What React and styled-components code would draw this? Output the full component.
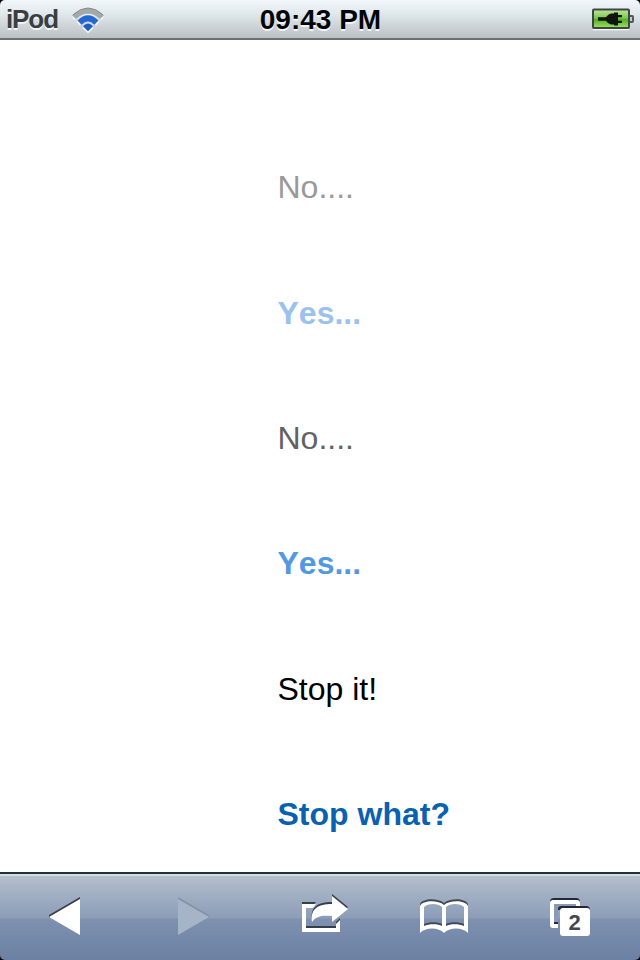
import React from "react";
import styled, { createGlobalStyle } from "styled-components";

const GlobalStyle = createGlobalStyle`
  * { box-sizing: border-box; }
  body {
    margin: 0;
    background: #fff;
    font-family: "Liberation Sans", Arial, Helvetica, sans-serif;
  }
`;

const Screen = styled.div`
  display: flex;
  flex-direction: column;
  width: 640px;
  height: 960px;
  overflow: hidden;
  background: #060a10;
`;

const StatusBar = styled.header`
  display: grid;
  grid-template-columns: 1fr auto 1fr;
  align-items: center;
  height: 40px;
  padding: 0 5px 0 6px;
  border-bottom: 2px solid #6d7072;
  border-radius: 5px 5px 0 0;
  background: linear-gradient(#f1f7fa 0, #e2e9ed 35%, #c9cfd3 75%, #bcc2c4 100%);
`;

const Carrier = styled.div`
  display: flex;
  align-items: center;
  gap: 13px;
`;

const Device = styled.span`
  color: #3a3e42;
  font-size: 26px;
  font-weight: bold;
  line-height: 38px;
  letter-spacing: -1.1px;
  text-shadow: 0 2px 0 #f0f4f6;
`;

const Clock = styled.time`
  padding-top: 2px;
  color: #050608;
  font-size: 28px;
  font-weight: bold;
  line-height: 36px;
  text-shadow: 0 2px 0 #f0f4f6;
`;

const Power = styled.div`
  display: flex;
  justify-content: flex-end;
`;

const Messages = styled.main`
  flex: 1;
  min-height: 0;
  padding: 85.3px 0 0 277.5px;
  background: #fff;
`;

const Message = styled.p`
  height: 125.4px;
  margin: 0;
  color: ${({ $color }) => $color};
  font-size: 32px;
  font-kerning: none;
  font-weight: ${({ $bold }) => ($bold ? "bold" : "normal")};
  line-height: 125.4px;
`;

const Toolbar = styled.nav`
  display: grid;
  grid-template-columns: 129px 129px 129px 117px 136px;
  height: 88px;
  border-top: 2px solid #252d37;
  border-radius: 0 0 5px 5px;
  background: linear-gradient(
    #d5dde4 0, #d5dde4 2px, #b3becd 2px, #8c9db7 44px, #7e91b0 45px, #6c80a3 100%
  );
`;

const ToolButton = styled.button`
  display: block;
  height: 86px;
  padding: 0;
  border: 0;
  background: none;
`;

const Glyph = styled.svg`
  display: block;
  width: ${({ $w }) => $w}px;
  height: ${({ $h }) => $h}px;
`;

const WifiIcon = () => (
  <Glyph $w={34} $h={28} viewBox="0 0 34 28">
    <g fill="none" stroke="#f6f9fb">
      <path d="M2 13Q17 1 32 13" strokeWidth="5" />
      <path d="M7 18.5Q17 10 27 18.5" strokeWidth="5" />
      <path d="M12 22 17 27 22 22" strokeWidth="2" />
    </g>
    <path d="M1 10.5Q17-4.5 33 10.5L29 14Q17 3.5 5 14Z" fill="#a5a8aa" />
    <path d="M2 9.8Q17-3.8 32 9.8" fill="none" stroke="#858a8d" strokeWidth="1" />
    <path d="M6.5 15.5Q17 5 27.5 15.5L23.4 19.8Q17 13.4 10.6 19.8Z" fill="#2468d2" />
    <path d="M12 21.2Q17 15.6 22 21.2L17 26.2Z" fill="#1e5dc8" />
  </Glyph>
);

const BatteryIcon = () => (
  <Glyph $w={43} $h={24} viewBox="0 0 43 24">
    <defs>
      <linearGradient id="charge" x1="0" y1="0" x2="0" y2="1">
        <stop offset="0" stopColor="#c0e89c" />
        <stop offset=".45" stopColor="#7cc94b" />
        <stop offset=".55" stopColor="#58ad27" />
        <stop offset="1" stopColor="#9be75b" />
      </linearGradient>
    </defs>
    <path d="M1 22.5h36" stroke="#f4f8fa" strokeWidth="1.5" />
    <rect x="1" y="2.5" width="36" height="18.5" rx="1" fill="url(#charge)" stroke="#3e4547" strokeWidth="2" />
    <path d="M38 9h2.2q.8 0 .8 1v4q0 1-.8 1H38" fill="#c6cbce" stroke="#53595c" strokeWidth="2" />
    <path d="M6 10.3h8q2-3.3 5-3.8h3V5.5h4V8H30V10.3h-4v3.4h4V16h-4v2.5h-4V17.5h-3q-3-.5-5-3.8H6Z" fill="#101510" />
  </Glyph>
);

const BackIcon = () => (
  <Glyph $w={129} $h={86} viewBox="0 874 129 86">
    <path d="M49 915 80 897V901L49 918Z" fill="#39404b" />
    <path d="M49 917 80 899V935Z" fill="#fff" />
  </Glyph>
);

const ForwardIcon = () => (
  <Glyph $w={129} $h={86} viewBox="129 874 129 86">
    <path d="M178 897 209 915V918L178 901Z" fill="#8491a6" />
    <path d="M178 899 209 917 178 935Z" fill="#a6b4c7" />
  </Glyph>
);

const ShareShapes = () => (
  <>
    <path d="M302 904H316L313 908H306V928H336V924L340 920V932H302Z" fill="currentColor" />
    <path d="M312 922C310 909 318 904 332 904V896L348 909 332 922V916C322 915 316 916 312 922Z" fill="currentColor" />
  </>
);

const ShareIcon = () => (
  <Glyph $w={129} $h={86} viewBox="258 874 129 86">
    <g color="#353e4a" transform="translate(0 -2)"><ShareShapes /></g>
    <g color="#fff"><ShareShapes /></g>
  </Glyph>
);

const BookShape = () => (
  <path
    d="M420 906C423 900 438 900 444 905C450 900 465 900 468 906V933C463 927 449 927 444 933C439 927 425 927 420 933ZM424 907V926C429 923.5 438 923.5 442 926V907C438 903 428 903 424 907ZM446 907V926C450 923.5 459 923.5 464 926V907C460 903 450 903 446 907Z"
    fill="currentColor"
    fillRule="evenodd"
  />
);

const BookIcon = () => (
  <Glyph $w={117} $h={86} viewBox="387 874 117 86">
    <g color="#414954" transform="translate(0 -2)"><BookShape /></g>
    <g color="#fff"><BookShape /></g>
  </Glyph>
);

const PagesIcon = () => (
  <Glyph $w={136} $h={86} viewBox="504 874 136 86">
    <rect x="550" y="898" width="30" height="12" rx="4" fill="#202a38" />
    <path d="M558 928H553Q550 928 550 925V903Q550 900 553 900H577Q580 900 580 903V909H576V904H554V924H558Z" fill="#fff" />
    <path d="M554 904H576V906H561Q558 906 558 909V922H554Z" fill="#8999b4" />
    <path d="M554 922H558V924H554Z" fill="#202a38" />
    <rect x="560" y="906" width="30" height="28" rx="4" fill="#202a38" />
    <rect x="560" y="908" width="30" height="28" rx="3" fill="#fff" />
    <text x="574.5" y="930" textAnchor="middle" fontSize="22" fontWeight="bold" fill="#434950" fontFamily="Liberation Sans, Arial, sans-serif">2</text>
  </Glyph>
);

const MESSAGES = [
  { text: "No....", color: "#999" },
  { text: "Yes...", color: "#9bc1ee", bold: true },
  { text: "No....", color: "#626262" },
  { text: "Yes...", color: "#5299e3", bold: true },
  { text: "Stop it!", color: "#000" },
  { text: "Stop what?", color: "#0861b1", bold: true },
];

const TOOLS = [
  { label: "Back", Icon: BackIcon },
  { label: "Forward", Icon: ForwardIcon, disabled: true },
  { label: "Share", Icon: ShareIcon },
  { label: "Bookmarks", Icon: BookIcon },
  { label: "Pages", Icon: PagesIcon },
];

export default function App() {
  return (
    <>
      <GlobalStyle />
      <Screen>
        <StatusBar>
          <Carrier>
            <Device>iPod</Device>
            <WifiIcon />
          </Carrier>
          <Clock>09:43 PM</Clock>
          <Power><BatteryIcon /></Power>
        </StatusBar>
        <Messages>
          {MESSAGES.map(({ text, color, bold }, index) => (
            <Message key={index} $color={color} $bold={bold}>{text}</Message>
          ))}
        </Messages>
        <Toolbar>
          {TOOLS.map(({ label, Icon, disabled }) => (
            <ToolButton key={label} aria-label={label} disabled={disabled}><Icon /></ToolButton>
          ))}
        </Toolbar>
      </Screen>
    </>
  );
}
